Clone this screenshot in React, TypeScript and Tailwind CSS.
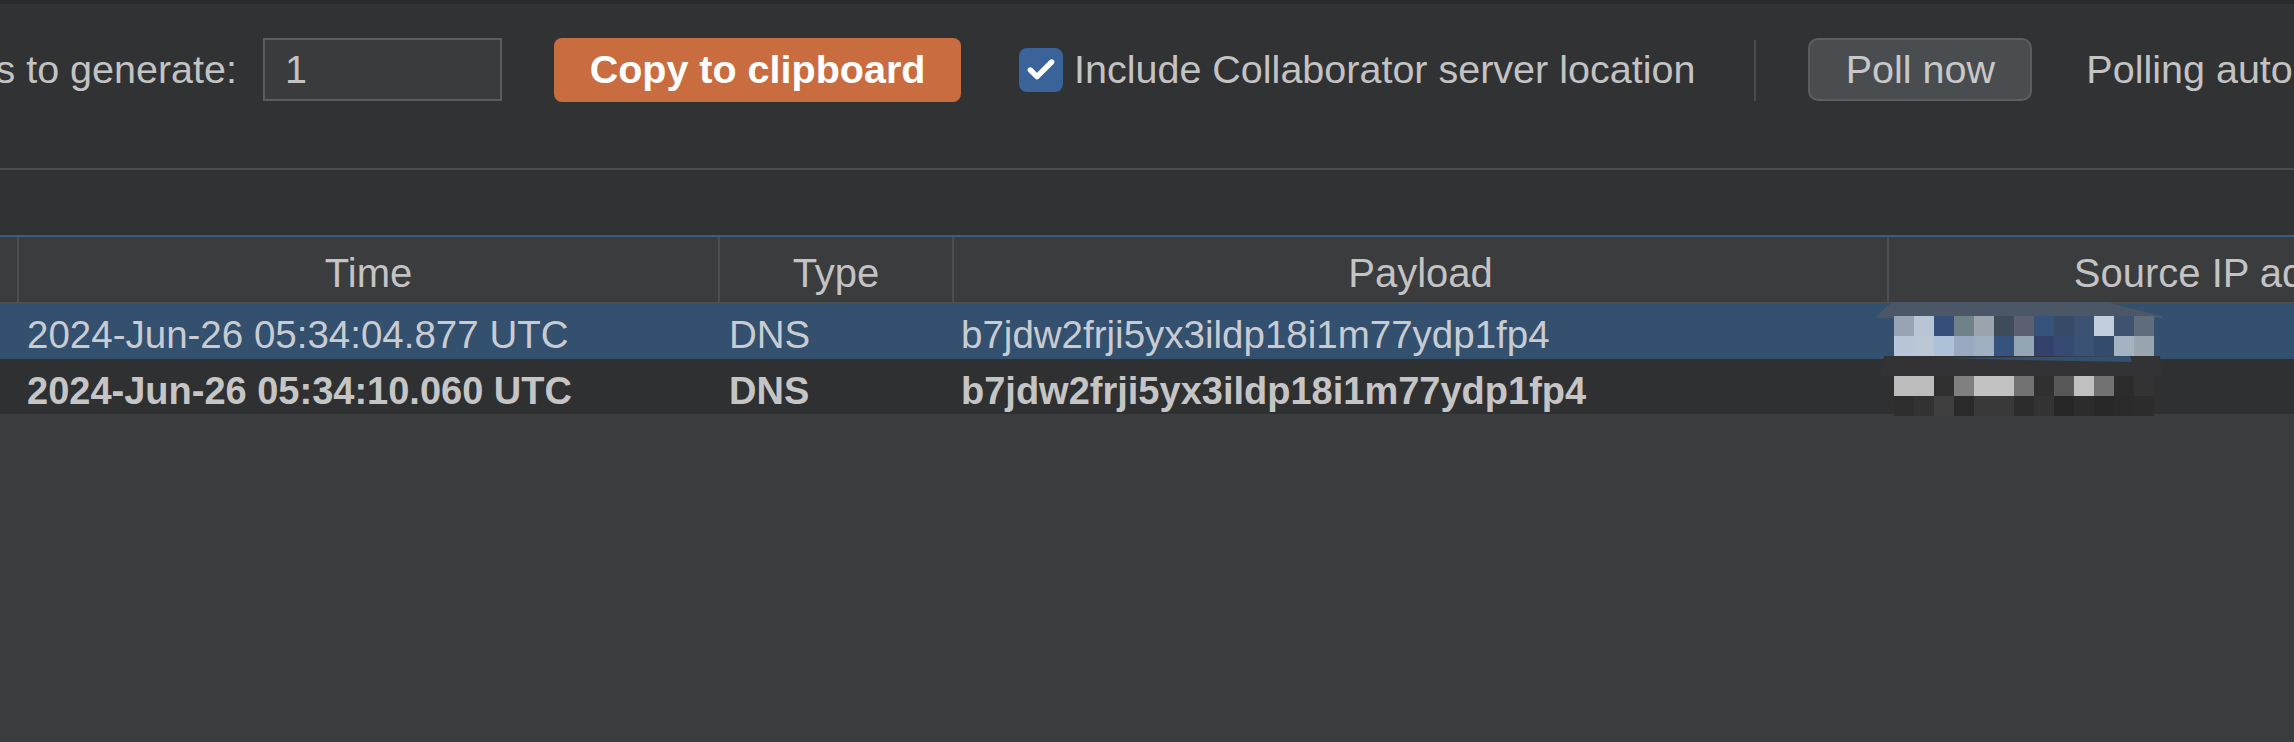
import { Check } from "lucide-react";

const COLUMNS = [
  { key: "num", label: "", width: "w-[19px]" },
  { key: "time", label: "Time", width: "w-[701px]" },
  { key: "type", label: "Type", width: "w-[234px]" },
  { key: "payload", label: "Payload", width: "w-[935px]" },
  { key: "source", label: "Source IP address", width: "w-[700px]" },
];

const ROWS = [
  {
    time: "2024-Jun-26 05:34:04.877 UTC",
    type: "DNS",
    payload: "b7jdw2frji5yx3ildp18i1m77ydp1fp4",
    selected: true,
  },
  {
    time: "2024-Jun-26 05:34:10.060 UTC",
    type: "DNS",
    payload: "b7jdw2frji5yx3ildp18i1m77ydp1fp4",
    selected: false,
  },
];

// pixelated redaction over the source ip column
const MOSAIC = [
  ["#98a4b3", "#b8c5d4", "#34507a", "#6f8288", "#9ca5ad", "#3e4b58", "#5c6070", "#35527a", "#364c66", "#3c5272", "#c3cedd", "#3f5270", "#5e6c7c"],
  ["#b9c6da", "#bcc7d5", "#adc1d8", "#9aa9c2", "#9fb0c3", "#36537e", "#94a5b4", "#34416b", "#364a74", "#3a5274", "#354b6c", "#a3b3c2", "#99a6b0"],
  ["#bcbcbc", "#bcbcbc", "#303030", "#808080", "#c2c2c2", "#c2c2c2", "#727272", "#303030", "#585858", "#c0c0c0", "#727272", "#2c2c2c", "#333333"],
  ["#2e2e2e", "#323232", "#3f3f3f", "#2a2a2a", "#393939", "#393939", "#2c2c2c", "#333333", "#262626", "#2c2c2c", "#282828", "#2a2a2a", "#2c2c2c"],
];

function Redaction() {
  const rowY = [20, 40, 80, 100];
  return (
    <svg
      className="absolute left-[1870px] top-[296px]"
      width="300"
      height="125"
      viewBox="0 0 300 125"
    >
      <polygon points="7,20 22,6 236,6 292,20 292,22 7,22" fill="#4b5767" />
      <polygon points="14,60 290,60 292,80 10,80" fill="#333335" />
      <polygon points="80,62 260,60 262,66 150,64" fill="#34506f" />
      {MOSAIC.map((row, r) =>
        row.map((c, i) => (
          <rect
            key={`${r}-${i}`}
            x={24 + i * 20}
            y={rowY[r]}
            width="20"
            height="20"
            fill={c}
          />
        ))
      )}
    </svg>
  );
}

export default function App() {
  return (
    <div className="relative h-[742px] w-[2294px] overflow-hidden bg-[#3b3c3e] font-['Liberation_Sans',Arial,sans-serif] text-[38.5px] leading-none text-[#c3c3c3]">
      <div className="h-[4px] bg-[#2a2a2b]" />

      {/* Toolbar */}
      <div className="flex h-[164px] items-start overflow-hidden bg-[#313234] pt-[34px] text-[39.5px]">
        <div className="flex h-[64px] w-[237px] shrink-0 items-center justify-end overflow-hidden whitespace-nowrap">
          Number of payloads to generate:
        </div>
        <div className="ml-[26px] flex h-[63px] w-[239px] shrink-0 items-center border-2 border-[#5b5c5e] bg-[#3a3b3d] pl-[20px]">
          1
        </div>
        <button className="ml-[52px] flex h-[64px] w-[407px] shrink-0 items-center justify-center whitespace-nowrap rounded-[8px] bg-[#c96d40] font-bold text-white">
          Copy to clipboard
        </button>
        <div className="flex h-[64px] shrink-0 items-center">
          <div className="ml-[58px] flex h-[44px] w-[44px] items-center justify-center rounded-[8px] bg-[#3a6399]">
            <Check className="h-[32px] w-[32px] text-white" strokeWidth={4} />
          </div>
          <span className="ml-[11px] whitespace-nowrap">
            Include Collaborator server location
          </span>
        </div>
        <div className="ml-[59px] mt-[2px] h-[61px] w-[2px] shrink-0 bg-[#4a4b4d]" />
        <button className="ml-[52px] flex h-[63px] w-[224px] shrink-0 items-center justify-center whitespace-nowrap rounded-[10px] border-2 border-[#5b5e61] bg-[#4a4d50] text-[#c8c8c8]">
          Poll now
        </button>
        <div className="ml-[54px] flex h-[64px] shrink-0 items-center whitespace-nowrap">
          Polling automatically every 60 seconds.
        </div>
      </div>

      <div className="h-[2px] bg-[#4a4b4d]" />
      <div className="h-[65px] bg-[#313234]" />
      <div className="h-[2px] bg-[#3d5a80]" />

      {/* Table */}
      <div className="flex h-[67px] border-b-2 border-[#4d4e50] bg-[#3b3c3e] text-[40px]">
        {COLUMNS.map((col) => (
          <div
            key={col.key}
            className={`${col.width} flex shrink-0 items-center justify-center whitespace-nowrap border-r-2 border-[#4d4e50] pt-[6px]`}
          >
            {col.label}
          </div>
        ))}
      </div>

      {ROWS.map((row, i) => (
        <div
          key={i}
          className={`flex h-[55px] items-center whitespace-nowrap pt-[8px] ${
            row.selected
              ? "bg-[#34506f] text-[#c8ccd2]"
              : "bg-[#2f3032] text-[38px] font-bold text-[#c5c5c5]"
          }`}
        >
          <div className="w-[19px] shrink-0" />
          <div className="w-[701px] shrink-0 pl-[8px]">{row.time}</div>
          <div className="w-[234px] shrink-0 pl-[9px]">{row.type}</div>
          <div className="w-[935px] shrink-0 pl-[7px]">{row.payload}</div>
          <div className="w-[700px] shrink-0" />
        </div>
      ))}

      <Redaction />
    </div>
  );
}
